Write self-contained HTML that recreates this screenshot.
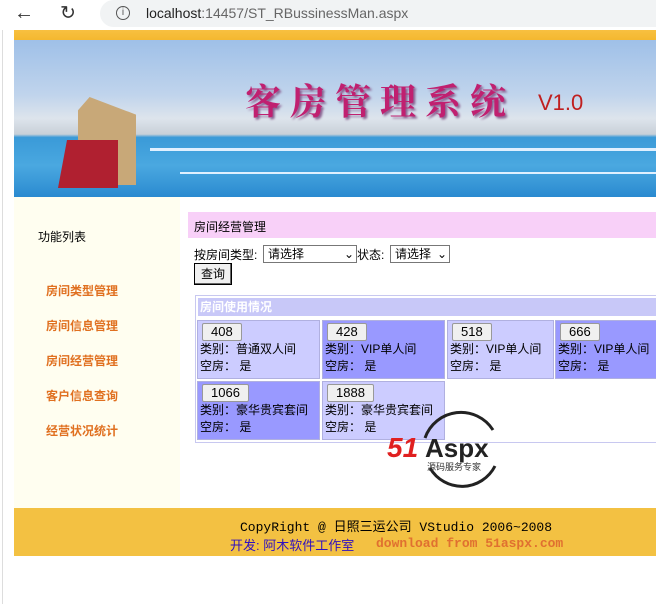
<!DOCTYPE html>
<html><head><meta charset="utf-8"><style>
body{margin:0;width:656px;height:604px;overflow:hidden;background:#fff;font-family:"Liberation Sans","Noto Sans CJK SC",sans-serif;font-size:13px;position:relative}
.a{position:absolute}
.cell{position:absolute;border:1px solid #b0b0e0;box-sizing:border-box;font-size:12px;line-height:17px;padding:1px 2px}
.cell .b{display:inline-block;border:1px solid #999;background:#f0f0f0;border-radius:2px;padding:0 8px;font-size:13px;line-height:16px;margin:1px 0 0 2px}
.l{background:#ccccff}.d{background:#9999ff}
.menu{position:absolute;left:46px;color:#e07020;font-size:12px;font-weight:bold}
</style></head><body>
<div class="a" style="left:0;top:0;width:656px;height:30px;background:#fff"></div>
<div class="a" style="left:14px;top:2px;font-size:20px;color:#333">←</div>
<div class="a" style="left:60px;top:2px;font-size:19px;color:#333">↻</div>
<div class="a" style="left:100px;top:0;width:570px;height:27px;background:#f1f3f4;border-radius:14px"></div>
<div class="a" style="left:116px;top:6px;width:12px;height:12px;border:1.5px solid #555;border-radius:50%;font-size:10px;line-height:12px;text-align:center;color:#555">i</div>
<div class="a" style="left:146px;top:5px;font-size:14px;color:#222">localhost<span style="color:#666">:14457/ST_RBussinessMan.aspx</span></div>
<div class="a" style="left:2px;top:30px;width:1px;height:574px;background:#ddd"></div>
<div class="a" style="left:14px;top:30px;width:642px;height:10px;background:linear-gradient(#f8c040,#f4b830)"></div>
<div class="a" style="left:14px;top:40px;width:642px;height:157px;background:linear-gradient(180deg,#9fc0e8 0%,#c0d4ec 35%,#dde4ec 50%,#c8d0d8 60%,#3a9ad8 62%,#4aa8e0 80%,#2a8ad0 100%)"></div>
<div class="a" style="left:150px;top:148px;width:506px;height:3px;background:#e0f0ff"></div>
<div class="a" style="left:180px;top:172px;width:476px;height:2px;background:#e0f0ff"></div>
<div class="a" style="left:78px;top:97px;width:58px;height:88px;background:#c8a878;clip-path:polygon(20% 0,100% 20%,100% 100%,0 100%,0 15%)"></div>
<div class="a" style="left:58px;top:140px;width:60px;height:48px;background:#b02030;clip-path:polygon(15% 0,100% 0,100% 100%,0 100%)"></div>
<div class="a" style="left:245px;top:74px;font-size:36px;color:#c02070;font-family:'Noto Serif CJK SC',serif;font-weight:bold;letter-spacing:9px;text-shadow:2px 2px 2px #8a6090">客房管理系统</div>
<div class="a" style="left:538px;top:90px;font-size:22px;color:#c02020">V1.0</div>
<div class="a" style="left:14px;top:197px;width:166px;height:311px;background:#fffef0"></div>
<div class="a" style="left:38px;top:228px;font-size:12px">功能列表</div>
<div class="menu" style="top:282px">房间类型管理</div>
<div class="menu" style="top:317px">房间信息管理</div>
<div class="menu" style="top:352px">房间经营管理</div>
<div class="menu" style="top:387px">客户信息查询</div>
<div class="menu" style="top:422px">经营状况统计</div>
<div class="a" style="left:188px;top:212px;width:468px;height:26px;background:#f8d0f8"></div>
<div class="a" style="left:194px;top:218px;font-size:12px">房间经营管理</div>
<div class="a" style="left:194px;top:246px;font-size:12px">按房间类型:</div>
<div class="a" style="left:263px;top:245px;width:88px;height:16px;border:1px solid #777;font-size:12px;line-height:16px;padding-left:4px">请选择<span style="position:absolute;right:2px">⌄</span></div>
<div class="a" style="left:357px;top:246px;font-size:12px">状态:</div>
<div class="a" style="left:390px;top:245px;width:54px;height:16px;border:1px solid #777;font-size:12px;line-height:16px;padding-left:4px">请选择<span style="position:absolute;right:2px">⌄</span></div>
<div class="a" style="left:194px;top:263px;width:36px;height:20px;border:1px solid #000;box-shadow:inset -1px -1px #666;background:#f0f0f0;font-size:12px;line-height:20px;text-align:center">查询</div>
<div class="a" style="left:195px;top:295px;width:470px;height:148px;border:1px solid #c8c8f0;box-sizing:border-box"></div>
<div class="a" style="left:198px;top:298px;width:458px;height:18px;background:#c8c8f8;color:#fff;font-weight:bold;font-size:12px;line-height:18px;padding-left:2px">房间使用情况</div>
<div class="cell l" style="left:197px;top:320px;width:123px;height:59px"><span class="b">408</span><br>类别：普通双人间<br>空房： 是</div>
<div class="cell d" style="left:322px;top:320px;width:123px;height:59px"><span class="b">428</span><br>类别：VIP单人间<br>空房： 是</div>
<div class="cell l" style="left:447px;top:320px;width:107px;height:59px"><span class="b">518</span><br>类别：VIP单人间<br>空房： 是</div>
<div class="cell d" style="left:555px;top:320px;width:110px;height:59px"><span class="b">666</span><br>类别：VIP单人间<br>空房： 是</div>
<div class="cell d" style="left:197px;top:381px;width:123px;height:59px"><span class="b">1066</span><br>类别：豪华贵宾套间<br>空房： 是</div>
<div class="cell l" style="left:322px;top:381px;width:123px;height:59px"><span class="b">1888</span><br>类别：豪华贵宾套间<br>空房： 是</div>
<svg class="a" style="left:385px;top:400px" width="130" height="96"><path d="M40 38 A38 38 0 0 1 108 30" fill="none" stroke="#222" stroke-width="3"/><path d="M45 68 A37 37 0 0 0 110 66" fill="none" stroke="#222" stroke-width="3"/>
<text x="2" y="57" font-size="28" font-weight="bold" font-style="italic" fill="#e02020" font-family="Liberation Sans">51</text><text x="40" y="57" font-size="26" font-weight="bold" fill="#222" font-family="Liberation Sans">Aspx</text><text x="42" y="70" font-size="9" fill="#333" font-family="Noto Sans CJK SC">源码服务专家</text></svg>
<div class="a" style="left:14px;top:508px;width:642px;height:48px;background:#f3c142"></div>
<div class="a" style="left:240px;top:516px;font-family:'Liberation Mono','Noto Sans CJK SC',monospace;font-size:13px">CopyRight @ 日照三运公司 VStudio 2006~2008</div>
<div class="a" style="left:230px;top:535px;font-size:13px;color:#3010c0">开发: 阿木软件工作室</div>
<div class="a" style="left:376px;top:536px;font-family:'Liberation Mono',monospace;font-size:13px;color:#e07030;font-weight:bold">download from 51aspx.com</div>
</body></html>
